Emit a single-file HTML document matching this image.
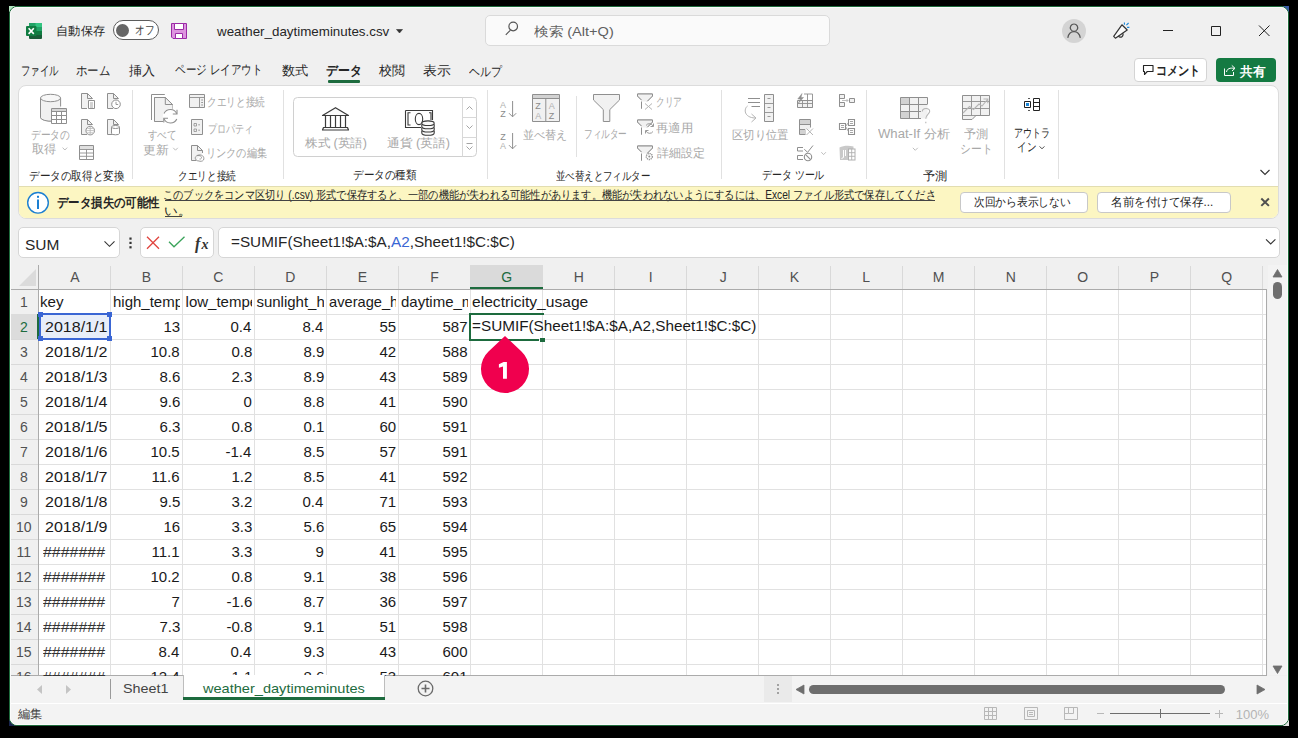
<!DOCTYPE html>
<html lang="ja"><head><meta charset="utf-8"><style>
html,body{margin:0;padding:0;width:1298px;height:738px;overflow:hidden;background:#000;font-family:"Liberation Sans", sans-serif;}
.t{position:absolute;white-space:nowrap;line-height:1;transform-origin:0 0;}
svg{overflow:visible}
</style></head><body>
<div style="position:absolute;left:9px;top:6px;width:6px;height:6px;background:#B4E6C2;"></div>
<div style="position:absolute;left:1283px;top:6px;width:6px;height:6px;background:#3A5CA8;"></div>
<div style="position:absolute;left:9px;top:720px;width:6px;height:6px;background:#1A2550;"></div>
<div style="position:absolute;left:1283px;top:720px;width:6px;height:6px;background:#E4E4E4;"></div>
<div style="position:absolute;left:9px;top:6px;width:1280px;height:720px;background:#F0F0F0;border:1px solid #1E6B3C;box-sizing:border-box;border-radius:8px;"></div>
<div class="t" style="left:56.46px;top:24.80px;font-size:12px;color:#262626;transform:scale(1.0217,1.0000);">自動保存</div>
<div style="position:absolute;left:113px;top:20px;width:46px;height:20px;border:1px solid #5c5c5c;border-radius:10px;box-sizing:border-box;background:#fff;"></div>
<div style="position:absolute;left:116px;top:24px;width:13px;height:13px;background:#666;border-radius:50%;"></div>
<div class="t" style="left:135.10px;top:23.90px;font-size:12px;color:#444;transform:scale(0.8048,1.0000);">オフ</div>
<div class="t" style="left:217.30px;top:24.70px;font-size:13.5px;color:#262626;transform:scale(0.9897,1.0000);">weather_daytimeminutes.csv</div>
<div style="position:absolute;left:485px;top:15px;width:345px;height:31px;background:#FAFAFA;border:1px solid #DADADA;box-sizing:border-box;border-radius:5px;"></div>
<div class="t" style="left:534.00px;top:24.50px;font-size:13px;color:#606060;transform:scale(1.1214,1.0000);">検索 (Alt+Q)</div>
<div class="t" style="left:20.84px;top:63.60px;font-size:13px;color:#262626;transform:scale(0.7280,1.0000);">ファイル</div>
<div class="t" style="left:76.12px;top:63.60px;font-size:13px;color:#262626;transform:scale(0.8838,1.0000);">ホーム</div>
<div class="t" style="left:129.00px;top:64.10px;font-size:13px;color:#262626;">挿入</div>
<div class="t" style="left:175.19px;top:63.10px;font-size:13px;color:#262626;transform:scale(0.8125,1.0000);">ページ レイアウト</div>
<div class="t" style="left:281.88px;top:64.10px;font-size:13px;color:#262626;transform:scale(1.0160,1.0000);">数式</div>
<div class="t" style="left:326.49px;top:63.60px;font-size:13px;color:#262626;font-weight:bold;transform:scale(0.9139,1.0000);">データ</div>
<div class="t" style="left:379.00px;top:63.60px;font-size:13px;color:#262626;">校閲</div>
<div class="t" style="left:422.63px;top:64.10px;font-size:13px;color:#262626;transform:scale(1.0667,1.0000);">表示</div>
<div class="t" style="left:468.50px;top:64.60px;font-size:13px;color:#262626;transform:scale(0.8410,1.0000);">ヘルプ</div>
<div style="position:absolute;left:328px;top:80px;width:32px;height:2.5px;background:#1D6B3E;border-radius:1px;"></div>
<div style="position:absolute;left:1134px;top:58px;width:73px;height:24px;background:#fff;border:1px solid #D4D4D4;box-sizing:border-box;border-radius:4px;"></div>
<div class="t" style="left:1156.29px;top:64.00px;font-size:13px;color:#262626;font-weight:bold;transform:scale(0.8574,1.0000);">コメント</div>
<div style="position:absolute;left:1216px;top:58px;width:60px;height:24px;background:#147A42;border-radius:4px;"></div>
<div class="t" style="left:1240.20px;top:65.00px;font-size:13px;color:#FFFFFF;font-weight:bold;transform:scale(0.9769,1.0000);">共有</div>
<div style="position:absolute;left:18px;top:85px;width:1261px;height:134px;background:#fff;border:1px solid #DCDCDC;box-sizing:border-box;border-radius:8px;"></div>
<div style="position:absolute;left:19px;top:186px;width:1259px;height:32px;background:#FCF6C2;border-top:1px solid #E2DDB0;box-sizing:border-box;border-radius:0 0 7px 7px;"></div>
<svg style="position:absolute;left:0px;top:0px" width="1298" height="738" viewBox="0 0 1298 738"><path d="M297.5 97.5 H472.5 A4 4 0 0 1 476.5 101.5 V152.5 A4 4 0 0 1 472.5 156.5 H297.5 A4 4 0 0 1 293.5 152.5 V101.5 A4 4 0 0 1 297.5 97.5 Z" stroke="#D0D0D0" fill="#FFFFFF"/><path d="M462.5 97.5 V156.5 M462.5 117.5 H476.5 M462.5 137.5 H476.5" stroke="#D8D8D8" fill="none"/></svg>
<div class="t" style="left:31.19px;top:128.50px;font-size:12px;color:#A8A8A8;transform:scale(0.8085,1.0000);">データの</div>
<div class="t" style="left:32.28px;top:143.40px;font-size:12px;color:#A8A8A8;transform:scale(1.0182,1.0000);">取得</div>
<div class="t" style="left:147.90px;top:129.30px;font-size:12px;color:#A8A8A8;transform:scale(0.7914,1.0000);">すべて</div>
<div class="t" style="left:143.43px;top:144.00px;font-size:12px;color:#A8A8A8;transform:scale(1.0682,1.0000);">更新</div>
<div class="t" style="left:207.19px;top:96.30px;font-size:12px;color:#A8A8A8;transform:scale(0.8029,1.0000);">クエリと接続</div>
<div class="t" style="left:208.04px;top:122.90px;font-size:12px;color:#A8A8A8;transform:scale(0.7579,1.0000);">プロパティ</div>
<div class="t" style="left:206.26px;top:146.70px;font-size:12px;color:#A8A8A8;transform:scale(0.8471,1.0000);">リンクの編集</div>
<div class="t" style="left:304.70px;top:137.00px;font-size:12px;color:#A8A8A8;transform:scale(1.0458,1.0000);">株式 (英語)</div>
<div class="t" style="left:386.64px;top:137.00px;font-size:12px;color:#A8A8A8;transform:scale(1.0621,1.0000);">通貨 (英語)</div>
<div class="t" style="left:522.87px;top:128.90px;font-size:12px;color:#A8A8A8;transform:scale(0.9261,1.0000);">並べ替え</div>
<div class="t" style="left:584.18px;top:128.40px;font-size:12px;color:#A8A8A8;transform:scale(0.7172,1.0000);">フィルター</div>
<div class="t" style="left:655.55px;top:95.50px;font-size:12px;color:#A8A8A8;transform:scale(0.7273,1.0000);">クリア</div>
<div class="t" style="left:655.97px;top:121.50px;font-size:12px;color:#A8A8A8;transform:scale(1.0294,1.0000);">再適用</div>
<div class="t" style="left:657.00px;top:147.40px;font-size:12px;color:#A8A8A8;">詳細設定</div>
<div class="t" style="left:731.96px;top:128.50px;font-size:12px;color:#A8A8A8;transform:scale(0.9448,1.0000);">区切り位置</div>
<div class="t" style="left:877.60px;top:128.30px;font-size:12px;color:#A8A8A8;transform:scale(1.0924,1.0000);">What-If 分析</div>
<div class="t" style="left:964.40px;top:128.30px;font-size:12px;color:#A8A8A8;transform:scale(1.0043,1.0000);">予測</div>
<div class="t" style="left:960.21px;top:142.50px;font-size:12px;color:#A8A8A8;transform:scale(0.8968,1.0000);">シート</div>
<div class="t" style="left:1014.45px;top:126.80px;font-size:12px;color:#262626;transform:scale(0.7511,1.0000);">アウトラ</div>
<div class="t" style="left:1016.70px;top:141.40px;font-size:12px;color:#262626;transform:scale(0.7955,1.0000);">イン</div>
<div class="t" style="left:29.12px;top:169.50px;font-size:12px;color:#262626;transform:scale(0.8821,1.0000);">データの取得と変換</div>
<div class="t" style="left:178.09px;top:169.50px;font-size:12px;color:#262626;transform:scale(0.8043,1.0000);">クエリと接続</div>
<div class="t" style="left:352.82px;top:169.00px;font-size:12px;color:#262626;transform:scale(0.8775,1.0000);">データの種類</div>
<div class="t" style="left:556.22px;top:169.50px;font-size:12px;color:#262626;transform:scale(0.7847,1.0000);">並べ替えとフィルター</div>
<div class="t" style="left:761.87px;top:169.00px;font-size:12px;color:#262626;transform:scale(0.8284,1.0000);">データ ツール</div>
<div class="t" style="left:923.20px;top:169.50px;font-size:12px;color:#262626;transform:scale(1.0087,1.0000);">予測</div>
<div style="position:absolute;left:132px;top:90px;width:1px;height:89px;background:#E1E1E1;"></div>
<div style="position:absolute;left:283px;top:90px;width:1px;height:89px;background:#E1E1E1;"></div>
<div style="position:absolute;left:487px;top:90px;width:1px;height:89px;background:#E1E1E1;"></div>
<div style="position:absolute;left:721px;top:90px;width:1px;height:89px;background:#E1E1E1;"></div>
<div style="position:absolute;left:866px;top:90px;width:1px;height:89px;background:#E1E1E1;"></div>
<div style="position:absolute;left:1004px;top:90px;width:1px;height:89px;background:#E1E1E1;"></div>
<div style="position:absolute;left:1058px;top:90px;width:1px;height:89px;background:#E1E1E1;"></div>
<div class="t" style="left:56.82px;top:196.40px;font-size:13px;color:#262626;font-weight:bold;transform:scale(0.8767,1.0000);">データ損失の可能性</div>
<div class="t" style="left:163.30px;top:189.30px;font-size:12px;color:#262626;transform:scale(0.8505,1.0000);">このブックをコンマ区切り (.csv) 形式で保存すると、一部の機能が失われる可能性があります。機能が失われないようにするには、Excel ファイル形式で保存してくださ</div>
<div class="t" style="left:163.87px;top:204.80px;font-size:12px;color:#262626;transform:scale(1.1333,1.0000);">い。</div>
<div style="position:absolute;left:165px;top:200px;width:770px;height:1px;background:#444;"></div>
<div style="position:absolute;left:165px;top:216px;width:17px;height:1px;background:#444;"></div>
<div style="position:absolute;left:960px;top:192px;width:128px;height:21px;background:#fff;border:1px solid #C8C8C8;box-sizing:border-box;border-radius:4px;"></div>
<div style="position:absolute;left:1097px;top:192px;width:134px;height:21px;background:#fff;border:1px solid #C8C8C8;box-sizing:border-box;border-radius:4px;"></div>
<div class="t" style="left:974.01px;top:195.80px;font-size:12px;color:#262626;transform:scale(0.8935,1.0000);">次回から表示しない</div>
<div class="t" style="left:1111.44px;top:196.30px;font-size:12px;color:#262626;transform:scale(0.9644,1.0000);">名前を付けて保存...</div>
<div style="position:absolute;left:18px;top:227px;width:102px;height:31px;background:#fff;border:1px solid #D6D6D6;box-sizing:border-box;border-radius:5px;"></div>
<div class="t" style="left:24.67px;top:237.10px;font-size:15px;color:#262626;transform:scale(1.0323,1.0000);">SUM</div>
<div style="position:absolute;left:140px;top:227px;width:74px;height:31px;background:#fff;border:1px solid #D6D6D6;box-sizing:border-box;border-radius:5px;"></div>
<div style="position:absolute;left:218px;top:227px;width:1062px;height:31px;background:#fff;border:1px solid #D6D6D6;box-sizing:border-box;border-radius:5px;"></div>
<div class="t" style="left:230.78px;top:234.10px;font-size:15px;color:#262626;transform:scale(1.0181,1.0000);">=SUMIF(Sheet1!$A:$A,<span style="color:#3A66D4">A2</span>,Sheet1!$C:$C)</div>
<div style="position:absolute;left:10px;top:265px;width:1256px;height:24px;background:#F0F0F0;"></div>
<div style="position:absolute;left:10px;top:289px;width:28px;height:386px;background:#F0F0F0;"></div>
<div style="position:absolute;left:39px;top:290px;width:1227px;height:385px;background:#fff;"></div>
<div style="position:absolute;left:110px;top:290px;width:1px;height:385px;background:#E1E1E1;"></div>
<div style="position:absolute;left:110px;top:266px;width:1px;height:23px;background:#D9D9D9;"></div>
<div style="position:absolute;left:182px;top:290px;width:1px;height:385px;background:#E1E1E1;"></div>
<div style="position:absolute;left:182px;top:266px;width:1px;height:23px;background:#D9D9D9;"></div>
<div style="position:absolute;left:254px;top:290px;width:1px;height:385px;background:#E1E1E1;"></div>
<div style="position:absolute;left:254px;top:266px;width:1px;height:23px;background:#D9D9D9;"></div>
<div style="position:absolute;left:326px;top:290px;width:1px;height:385px;background:#E1E1E1;"></div>
<div style="position:absolute;left:326px;top:266px;width:1px;height:23px;background:#D9D9D9;"></div>
<div style="position:absolute;left:398px;top:290px;width:1px;height:385px;background:#E1E1E1;"></div>
<div style="position:absolute;left:398px;top:266px;width:1px;height:23px;background:#D9D9D9;"></div>
<div style="position:absolute;left:470px;top:290px;width:1px;height:385px;background:#E1E1E1;"></div>
<div style="position:absolute;left:470px;top:266px;width:1px;height:23px;background:#D9D9D9;"></div>
<div style="position:absolute;left:542px;top:290px;width:1px;height:385px;background:#E1E1E1;"></div>
<div style="position:absolute;left:542px;top:266px;width:1px;height:23px;background:#D9D9D9;"></div>
<div style="position:absolute;left:614px;top:290px;width:1px;height:385px;background:#E1E1E1;"></div>
<div style="position:absolute;left:614px;top:266px;width:1px;height:23px;background:#D9D9D9;"></div>
<div style="position:absolute;left:686px;top:290px;width:1px;height:385px;background:#E1E1E1;"></div>
<div style="position:absolute;left:686px;top:266px;width:1px;height:23px;background:#D9D9D9;"></div>
<div style="position:absolute;left:758px;top:290px;width:1px;height:385px;background:#E1E1E1;"></div>
<div style="position:absolute;left:758px;top:266px;width:1px;height:23px;background:#D9D9D9;"></div>
<div style="position:absolute;left:830px;top:290px;width:1px;height:385px;background:#E1E1E1;"></div>
<div style="position:absolute;left:830px;top:266px;width:1px;height:23px;background:#D9D9D9;"></div>
<div style="position:absolute;left:902px;top:290px;width:1px;height:385px;background:#E1E1E1;"></div>
<div style="position:absolute;left:902px;top:266px;width:1px;height:23px;background:#D9D9D9;"></div>
<div style="position:absolute;left:974px;top:290px;width:1px;height:385px;background:#E1E1E1;"></div>
<div style="position:absolute;left:974px;top:266px;width:1px;height:23px;background:#D9D9D9;"></div>
<div style="position:absolute;left:1046px;top:290px;width:1px;height:385px;background:#E1E1E1;"></div>
<div style="position:absolute;left:1046px;top:266px;width:1px;height:23px;background:#D9D9D9;"></div>
<div style="position:absolute;left:1118px;top:290px;width:1px;height:385px;background:#E1E1E1;"></div>
<div style="position:absolute;left:1118px;top:266px;width:1px;height:23px;background:#D9D9D9;"></div>
<div style="position:absolute;left:1190px;top:290px;width:1px;height:385px;background:#E1E1E1;"></div>
<div style="position:absolute;left:1190px;top:266px;width:1px;height:23px;background:#D9D9D9;"></div>
<div style="position:absolute;left:1262px;top:290px;width:1px;height:385px;background:#E1E1E1;"></div>
<div style="position:absolute;left:1262px;top:266px;width:1px;height:23px;background:#D9D9D9;"></div>
<div style="position:absolute;left:39px;top:314px;width:1227px;height:1px;background:#E1E1E1;"></div>
<div style="position:absolute;left:10px;top:314px;width:28px;height:1px;background:#D9D9D9;"></div>
<div style="position:absolute;left:39px;top:339px;width:1227px;height:1px;background:#E1E1E1;"></div>
<div style="position:absolute;left:10px;top:339px;width:28px;height:1px;background:#D9D9D9;"></div>
<div style="position:absolute;left:39px;top:364px;width:1227px;height:1px;background:#E1E1E1;"></div>
<div style="position:absolute;left:10px;top:364px;width:28px;height:1px;background:#D9D9D9;"></div>
<div style="position:absolute;left:39px;top:389px;width:1227px;height:1px;background:#E1E1E1;"></div>
<div style="position:absolute;left:10px;top:389px;width:28px;height:1px;background:#D9D9D9;"></div>
<div style="position:absolute;left:39px;top:414px;width:1227px;height:1px;background:#E1E1E1;"></div>
<div style="position:absolute;left:10px;top:414px;width:28px;height:1px;background:#D9D9D9;"></div>
<div style="position:absolute;left:39px;top:439px;width:1227px;height:1px;background:#E1E1E1;"></div>
<div style="position:absolute;left:10px;top:439px;width:28px;height:1px;background:#D9D9D9;"></div>
<div style="position:absolute;left:39px;top:464px;width:1227px;height:1px;background:#E1E1E1;"></div>
<div style="position:absolute;left:10px;top:464px;width:28px;height:1px;background:#D9D9D9;"></div>
<div style="position:absolute;left:39px;top:489px;width:1227px;height:1px;background:#E1E1E1;"></div>
<div style="position:absolute;left:10px;top:489px;width:28px;height:1px;background:#D9D9D9;"></div>
<div style="position:absolute;left:39px;top:514px;width:1227px;height:1px;background:#E1E1E1;"></div>
<div style="position:absolute;left:10px;top:514px;width:28px;height:1px;background:#D9D9D9;"></div>
<div style="position:absolute;left:39px;top:539px;width:1227px;height:1px;background:#E1E1E1;"></div>
<div style="position:absolute;left:10px;top:539px;width:28px;height:1px;background:#D9D9D9;"></div>
<div style="position:absolute;left:39px;top:564px;width:1227px;height:1px;background:#E1E1E1;"></div>
<div style="position:absolute;left:10px;top:564px;width:28px;height:1px;background:#D9D9D9;"></div>
<div style="position:absolute;left:39px;top:589px;width:1227px;height:1px;background:#E1E1E1;"></div>
<div style="position:absolute;left:10px;top:589px;width:28px;height:1px;background:#D9D9D9;"></div>
<div style="position:absolute;left:39px;top:614px;width:1227px;height:1px;background:#E1E1E1;"></div>
<div style="position:absolute;left:10px;top:614px;width:28px;height:1px;background:#D9D9D9;"></div>
<div style="position:absolute;left:39px;top:639px;width:1227px;height:1px;background:#E1E1E1;"></div>
<div style="position:absolute;left:10px;top:639px;width:28px;height:1px;background:#D9D9D9;"></div>
<div style="position:absolute;left:39px;top:664px;width:1227px;height:1px;background:#E1E1E1;"></div>
<div style="position:absolute;left:10px;top:664px;width:28px;height:1px;background:#D9D9D9;"></div>
<div style="position:absolute;left:10px;top:289px;width:1257px;height:1px;background:#ABABAB;"></div>
<div style="position:absolute;left:38px;top:265px;width:1px;height:410px;background:#ABABAB;"></div>
<div style="position:absolute;left:1266px;top:289px;width:1px;height:387px;background:#ABABAB;"></div>
<div style="position:absolute;left:10px;top:675px;width:1257px;height:1px;background:#ABABAB;"></div>
<svg style="position:absolute;left:19px;top:269px" width="17" height="17" viewBox="0 0 17 17"><polygon points="17,0 17,17 0,17" fill="#DBDBDB"/></svg>
<div style="position:absolute;left:470px;top:265px;width:73px;height:24px;background:#DADADA;"></div>
<div style="position:absolute;left:470px;top:287px;width:73px;height:2px;background:#1D6B3E;"></div>
<div style="position:absolute;left:10px;top:314px;width:28px;height:25px;background:#DCDCDC;"></div>
<div style="position:absolute;left:37px;top:314px;width:2px;height:25px;background:#1D6B3E;"></div>
<div class="t" style="left:70.30px;top:270.00px;font-size:14px;color:#505050;">A</div>
<div class="t" style="left:141.80px;top:270.00px;font-size:14px;color:#505050;">B</div>
<div class="t" style="left:213.30px;top:270.00px;font-size:14px;color:#505050;">C</div>
<div class="t" style="left:285.30px;top:270.00px;font-size:14px;color:#505050;">D</div>
<div class="t" style="left:357.80px;top:270.00px;font-size:14px;color:#505050;">E</div>
<div class="t" style="left:430.30px;top:270.00px;font-size:14px;color:#505050;">F</div>
<div class="t" style="left:501.30px;top:270.00px;font-size:14px;color:#1D6B3E;">G</div>
<div class="t" style="left:573.80px;top:270.00px;font-size:14px;color:#505050;">H</div>
<div class="t" style="left:648.80px;top:270.00px;font-size:14px;color:#505050;">I</div>
<div class="t" style="left:719.80px;top:270.00px;font-size:14px;color:#505050;">J</div>
<div class="t" style="left:789.80px;top:270.00px;font-size:14px;color:#505050;">K</div>
<div class="t" style="left:862.30px;top:270.00px;font-size:14px;color:#505050;">L</div>
<div class="t" style="left:932.80px;top:270.00px;font-size:14px;color:#505050;">M</div>
<div class="t" style="left:1005.80px;top:270.00px;font-size:14px;color:#505050;">N</div>
<div class="t" style="left:1077.30px;top:270.00px;font-size:14px;color:#505050;">O</div>
<div class="t" style="left:1149.80px;top:270.00px;font-size:14px;color:#505050;">P</div>
<div class="t" style="left:1221.30px;top:270.00px;font-size:14px;color:#505050;">Q</div>
<div class="t" style="left:20.00px;top:295.00px;font-size:14px;color:#505050;">1</div>
<div class="t" style="left:20.00px;top:320.00px;font-size:14px;color:#1D6B3E;">2</div>
<div class="t" style="left:20.00px;top:345.00px;font-size:14px;color:#505050;">3</div>
<div class="t" style="left:20.00px;top:370.00px;font-size:14px;color:#505050;">4</div>
<div class="t" style="left:20.00px;top:395.00px;font-size:14px;color:#505050;">5</div>
<div class="t" style="left:20.00px;top:420.00px;font-size:14px;color:#505050;">6</div>
<div class="t" style="left:20.00px;top:445.00px;font-size:14px;color:#505050;">7</div>
<div class="t" style="left:20.00px;top:470.00px;font-size:14px;color:#505050;">8</div>
<div class="t" style="left:20.00px;top:495.00px;font-size:14px;color:#505050;">9</div>
<div class="t" style="left:16.00px;top:520.00px;font-size:14px;color:#505050;">10</div>
<div class="t" style="left:16.50px;top:545.00px;font-size:14px;color:#505050;">11</div>
<div class="t" style="left:16.00px;top:570.00px;font-size:14px;color:#505050;">12</div>
<div class="t" style="left:16.00px;top:595.00px;font-size:14px;color:#505050;">13</div>
<div class="t" style="left:16.00px;top:620.00px;font-size:14px;color:#505050;">14</div>
<div class="t" style="left:16.00px;top:645.00px;font-size:14px;color:#505050;">15</div>
<div class="t" style="left:16.00px;top:670.00px;font-size:14px;color:#505050;">16</div>
<div style="position:absolute;left:39px;top:315px;width:71px;height:24px;background:#E8EEF9;"></div>
<div class="t" style="left:45.23px;top:319.00px;font-size:15px;color:#1a1a1a;transform:scale(1.0684,1.0000);">2018/1/1</div>
<div class="t" style="left:163.50px;top:319.00px;font-size:15px;color:#1a1a1a;">13</div>
<div class="t" style="left:230.50px;top:319.00px;font-size:15px;color:#1a1a1a;">0.4</div>
<div class="t" style="left:302.50px;top:319.00px;font-size:15px;color:#1a1a1a;">8.4</div>
<div class="t" style="left:379.50px;top:319.00px;font-size:15px;color:#1a1a1a;">55</div>
<div class="t" style="left:442.50px;top:319.00px;font-size:15px;color:#1a1a1a;">587</div>
<div class="t" style="left:45.23px;top:344.00px;font-size:15px;color:#1a1a1a;transform:scale(1.0684,1.0000);">2018/1/2</div>
<div class="t" style="left:150.50px;top:344.00px;font-size:15px;color:#1a1a1a;">10.8</div>
<div class="t" style="left:231.50px;top:344.00px;font-size:15px;color:#1a1a1a;">0.8</div>
<div class="t" style="left:303.50px;top:344.00px;font-size:15px;color:#1a1a1a;">8.9</div>
<div class="t" style="left:379.50px;top:344.00px;font-size:15px;color:#1a1a1a;">42</div>
<div class="t" style="left:442.50px;top:344.00px;font-size:15px;color:#1a1a1a;">588</div>
<div class="t" style="left:45.23px;top:369.00px;font-size:15px;color:#1a1a1a;transform:scale(1.0684,1.0000);">2018/1/3</div>
<div class="t" style="left:159.50px;top:369.00px;font-size:15px;color:#1a1a1a;">8.6</div>
<div class="t" style="left:231.50px;top:369.00px;font-size:15px;color:#1a1a1a;">2.3</div>
<div class="t" style="left:303.50px;top:369.00px;font-size:15px;color:#1a1a1a;">8.9</div>
<div class="t" style="left:379.50px;top:369.00px;font-size:15px;color:#1a1a1a;">43</div>
<div class="t" style="left:442.50px;top:369.00px;font-size:15px;color:#1a1a1a;">589</div>
<div class="t" style="left:45.23px;top:394.00px;font-size:15px;color:#1a1a1a;transform:scale(1.0684,1.0000);">2018/1/4</div>
<div class="t" style="left:159.50px;top:394.00px;font-size:15px;color:#1a1a1a;">9.6</div>
<div class="t" style="left:243.50px;top:394.00px;font-size:15px;color:#1a1a1a;">0</div>
<div class="t" style="left:303.50px;top:394.00px;font-size:15px;color:#1a1a1a;">8.8</div>
<div class="t" style="left:379.50px;top:394.00px;font-size:15px;color:#1a1a1a;">41</div>
<div class="t" style="left:442.50px;top:394.00px;font-size:15px;color:#1a1a1a;">590</div>
<div class="t" style="left:45.23px;top:419.00px;font-size:15px;color:#1a1a1a;transform:scale(1.0684,1.0000);">2018/1/5</div>
<div class="t" style="left:159.50px;top:419.00px;font-size:15px;color:#1a1a1a;">6.3</div>
<div class="t" style="left:231.50px;top:419.00px;font-size:15px;color:#1a1a1a;">0.8</div>
<div class="t" style="left:303.50px;top:419.00px;font-size:15px;color:#1a1a1a;">0.1</div>
<div class="t" style="left:379.50px;top:419.00px;font-size:15px;color:#1a1a1a;">60</div>
<div class="t" style="left:442.50px;top:419.00px;font-size:15px;color:#1a1a1a;">591</div>
<div class="t" style="left:45.23px;top:444.00px;font-size:15px;color:#1a1a1a;transform:scale(1.0684,1.0000);">2018/1/6</div>
<div class="t" style="left:150.50px;top:444.00px;font-size:15px;color:#1a1a1a;">10.5</div>
<div class="t" style="left:225.50px;top:444.00px;font-size:15px;color:#1a1a1a;">-1.4</div>
<div class="t" style="left:303.50px;top:444.00px;font-size:15px;color:#1a1a1a;">8.5</div>
<div class="t" style="left:379.50px;top:444.00px;font-size:15px;color:#1a1a1a;">57</div>
<div class="t" style="left:442.50px;top:444.00px;font-size:15px;color:#1a1a1a;">591</div>
<div class="t" style="left:45.23px;top:469.00px;font-size:15px;color:#1a1a1a;transform:scale(1.0684,1.0000);">2018/1/7</div>
<div class="t" style="left:151.50px;top:469.00px;font-size:15px;color:#1a1a1a;">11.6</div>
<div class="t" style="left:231.50px;top:469.00px;font-size:15px;color:#1a1a1a;">1.2</div>
<div class="t" style="left:303.50px;top:469.00px;font-size:15px;color:#1a1a1a;">8.5</div>
<div class="t" style="left:379.50px;top:469.00px;font-size:15px;color:#1a1a1a;">41</div>
<div class="t" style="left:442.50px;top:469.00px;font-size:15px;color:#1a1a1a;">592</div>
<div class="t" style="left:45.23px;top:494.00px;font-size:15px;color:#1a1a1a;transform:scale(1.0684,1.0000);">2018/1/8</div>
<div class="t" style="left:159.50px;top:494.00px;font-size:15px;color:#1a1a1a;">9.5</div>
<div class="t" style="left:231.50px;top:494.00px;font-size:15px;color:#1a1a1a;">3.2</div>
<div class="t" style="left:302.50px;top:494.00px;font-size:15px;color:#1a1a1a;">0.4</div>
<div class="t" style="left:379.50px;top:494.00px;font-size:15px;color:#1a1a1a;">71</div>
<div class="t" style="left:442.50px;top:494.00px;font-size:15px;color:#1a1a1a;">593</div>
<div class="t" style="left:45.23px;top:519.00px;font-size:15px;color:#1a1a1a;transform:scale(1.0684,1.0000);">2018/1/9</div>
<div class="t" style="left:163.50px;top:519.00px;font-size:15px;color:#1a1a1a;">16</div>
<div class="t" style="left:231.50px;top:519.00px;font-size:15px;color:#1a1a1a;">3.3</div>
<div class="t" style="left:303.50px;top:519.00px;font-size:15px;color:#1a1a1a;">5.6</div>
<div class="t" style="left:379.50px;top:519.00px;font-size:15px;color:#1a1a1a;">65</div>
<div class="t" style="left:442.50px;top:519.00px;font-size:15px;color:#1a1a1a;">594</div>
<div class="t" style="left:43.10px;top:544.00px;font-size:15px;color:#333333;transform:scale(1.0638,1.0000);">#######</div>
<div class="t" style="left:151.50px;top:544.00px;font-size:15px;color:#1a1a1a;">11.1</div>
<div class="t" style="left:231.50px;top:544.00px;font-size:15px;color:#1a1a1a;">3.3</div>
<div class="t" style="left:315.50px;top:544.00px;font-size:15px;color:#1a1a1a;">9</div>
<div class="t" style="left:379.50px;top:544.00px;font-size:15px;color:#1a1a1a;">41</div>
<div class="t" style="left:442.50px;top:544.00px;font-size:15px;color:#1a1a1a;">595</div>
<div class="t" style="left:43.10px;top:569.00px;font-size:15px;color:#333333;transform:scale(1.0638,1.0000);">#######</div>
<div class="t" style="left:150.50px;top:569.00px;font-size:15px;color:#1a1a1a;">10.2</div>
<div class="t" style="left:231.50px;top:569.00px;font-size:15px;color:#1a1a1a;">0.8</div>
<div class="t" style="left:303.50px;top:569.00px;font-size:15px;color:#1a1a1a;">9.1</div>
<div class="t" style="left:379.50px;top:569.00px;font-size:15px;color:#1a1a1a;">38</div>
<div class="t" style="left:442.50px;top:569.00px;font-size:15px;color:#1a1a1a;">596</div>
<div class="t" style="left:43.10px;top:594.00px;font-size:15px;color:#333333;transform:scale(1.0638,1.0000);">#######</div>
<div class="t" style="left:171.50px;top:594.00px;font-size:15px;color:#1a1a1a;">7</div>
<div class="t" style="left:226.50px;top:594.00px;font-size:15px;color:#1a1a1a;">-1.6</div>
<div class="t" style="left:303.50px;top:594.00px;font-size:15px;color:#1a1a1a;">8.7</div>
<div class="t" style="left:379.50px;top:594.00px;font-size:15px;color:#1a1a1a;">36</div>
<div class="t" style="left:442.50px;top:594.00px;font-size:15px;color:#1a1a1a;">597</div>
<div class="t" style="left:43.10px;top:619.00px;font-size:15px;color:#333333;transform:scale(1.0638,1.0000);">#######</div>
<div class="t" style="left:159.50px;top:619.00px;font-size:15px;color:#1a1a1a;">7.3</div>
<div class="t" style="left:226.50px;top:619.00px;font-size:15px;color:#1a1a1a;">-0.8</div>
<div class="t" style="left:303.50px;top:619.00px;font-size:15px;color:#1a1a1a;">9.1</div>
<div class="t" style="left:379.50px;top:619.00px;font-size:15px;color:#1a1a1a;">51</div>
<div class="t" style="left:442.50px;top:619.00px;font-size:15px;color:#1a1a1a;">598</div>
<div class="t" style="left:43.10px;top:644.00px;font-size:15px;color:#333333;transform:scale(1.0638,1.0000);">#######</div>
<div class="t" style="left:158.50px;top:644.00px;font-size:15px;color:#1a1a1a;">8.4</div>
<div class="t" style="left:230.50px;top:644.00px;font-size:15px;color:#1a1a1a;">0.4</div>
<div class="t" style="left:303.50px;top:644.00px;font-size:15px;color:#1a1a1a;">9.3</div>
<div class="t" style="left:379.50px;top:644.00px;font-size:15px;color:#1a1a1a;">43</div>
<div class="t" style="left:442.50px;top:644.00px;font-size:15px;color:#1a1a1a;">600</div>
<div class="t" style="left:43.10px;top:669.00px;font-size:15px;color:#333333;transform:scale(1.0638,1.0000);">#######</div>
<div class="t" style="left:150.50px;top:669.00px;font-size:15px;color:#1a1a1a;">12.4</div>
<div class="t" style="left:231.50px;top:669.00px;font-size:15px;color:#1a1a1a;">1.1</div>
<div class="t" style="left:303.50px;top:669.00px;font-size:15px;color:#1a1a1a;">8.6</div>
<div class="t" style="left:379.50px;top:669.00px;font-size:15px;color:#1a1a1a;">53</div>
<div class="t" style="left:442.50px;top:669.00px;font-size:15px;color:#1a1a1a;">601</div>
<div class="t" style="left:40.09px;top:294.00px;font-size:15px;color:#1a1a1a;transform:scale(1.0091,1.0000);">key</div>
<div style="position:absolute;left:111px;top:290px;width:69px;height:24px;overflow:hidden;"><div class="t" style="left:2.0px;top:4px;font-size:15px;color:#1a1a1a;">high_temperature</div></div>
<div style="position:absolute;left:183px;top:290px;width:69px;height:24px;overflow:hidden;"><div class="t" style="left:2.6px;top:4px;font-size:15px;color:#1a1a1a;">low_temperature</div></div>
<div style="position:absolute;left:255px;top:290px;width:69px;height:24px;overflow:hidden;"><div class="t" style="left:1.4px;top:4px;font-size:15px;color:#1a1a1a;">sunlight_hours</div></div>
<div style="position:absolute;left:327px;top:290px;width:69px;height:24px;overflow:hidden;"><div class="t" style="left:1.52px;top:4px;font-size:15px;color:#1a1a1a;transform:scaleX(0.977);">average_humidity</div></div>
<div style="position:absolute;left:399px;top:290px;width:69px;height:24px;overflow:hidden;"><div class="t" style="left:2.0px;top:4px;font-size:15px;color:#1a1a1a;">daytime_minutes</div></div>
<div class="t" style="left:472.46px;top:294.00px;font-size:15px;color:#1a1a1a;transform:scale(1.0409,1.0000);">electricity_usage</div>
<div class="t" style="left:472.48px;top:318.00px;font-size:15px;color:#1a1a1a;transform:scale(1.0199,1.0000);">=SUMIF(Sheet1!$A:$A,A2,Sheet1!$C:$C)</div>
<div style="position:absolute;left:39px;top:313px;width:72px;height:27px;border:2px solid #3A66D4;box-sizing:border-box;"></div>
<div style="position:absolute;left:38px;top:312px;width:5px;height:5px;background:#3A66D4;"></div>
<div style="position:absolute;left:107px;top:312px;width:5px;height:5px;background:#3A66D4;"></div>
<div style="position:absolute;left:38px;top:336px;width:5px;height:5px;background:#3A66D4;"></div>
<div style="position:absolute;left:107px;top:336px;width:5px;height:5px;background:#3A66D4;"></div>
<div style="position:absolute;left:469px;top:313px;width:75px;height:2px;background:#1D6B3E;"></div>
<div style="position:absolute;left:469px;top:313px;width:2px;height:28px;background:#1D6B3E;"></div>
<div style="position:absolute;left:469px;top:339px;width:70px;height:2px;background:#1D6B3E;"></div>
<div style="position:absolute;left:540px;top:338px;width:5px;height:4px;background:#1D6B3E;"></div>
<svg style="position:absolute;left:481px;top:336px" width="48" height="58" viewBox="0 0 48 58"><path d="M24 0 L40.5 15.5 A24 24 0 1 1 7.5 15.5 Z" fill="#F0004E"/></svg>
<svg style="position:absolute;left:0px;top:0px" width="1298" height="738" viewBox="0 0 1298 738"><path d="M503.6 362.1 H506.9 V378.8 H503 V366.6 L498.9 367.8 V364.3 Z" fill="#FFFFFF"/></svg>
<div style="position:absolute;left:1268px;top:265px;width:20px;height:410px;background:#F3F3F3;"></div>
<svg style="position:absolute;left:1273px;top:269px" width="9" height="8" viewBox="0 0 9 8"><polygon points="4.5,0.5 9,8 0,8" fill="#6E6E6E" stroke="#6E6E6E" stroke-width="0.8" stroke-linejoin="round"/></svg>
<div style="position:absolute;left:1273px;top:282px;width:9px;height:17px;background:#6E6E6E;border-radius:4.5px;"></div>
<svg style="position:absolute;left:1273px;top:666px" width="9" height="8" viewBox="0 0 9 8"><polygon points="0,0 9,0 4.5,7.5" fill="#6E6E6E" stroke="#6E6E6E" stroke-width="0.8" stroke-linejoin="round"/></svg>
<div style="position:absolute;left:10px;top:676px;width:1278px;height:27px;background:#F3F3F3;"></div>
<svg style="position:absolute;left:37px;top:685px" width="5" height="9" viewBox="0 0 5 9"><polygon points="5,0 5,9 0,4.5" fill="#C4C4C4"/></svg>
<svg style="position:absolute;left:66px;top:685px" width="5" height="9" viewBox="0 0 5 9"><polygon points="0,0 0,9 5,4.5" fill="#C4C4C4"/></svg>
<div style="position:absolute;left:110px;top:679px;width:1px;height:20px;background:#9A9A9A;"></div>
<div class="t" style="left:123.14px;top:682.00px;font-size:13.5px;color:#444;transform:scale(1.0634,1.0000);">Sheet1</div>
<div style="position:absolute;left:183px;top:675px;width:202px;height:25px;background:#fff;border-left:1px solid #BDBDBD;border-right:1px solid #BDBDBD;box-sizing:border-box;"></div>
<div style="position:absolute;left:183px;top:697px;width:202px;height:3px;background:#1D6B3E;"></div>
<div class="t" style="left:203.40px;top:682.00px;font-size:13.5px;color:#1D6B3E;transform:scale(1.0787,1.0000);">weather_daytimeminutes</div>
<svg style="position:absolute;left:417px;top:680px" width="17" height="17" viewBox="0 0 17 17"><circle cx="8.5" cy="8.5" r="7.3" fill="none" stroke="#6A6A6A" stroke-width="1.3"/><path d="M8.5 4.5v8M4.5 8.5h8" stroke="#6A6A6A" stroke-width="1.6"/></svg>
<div style="position:absolute;left:764px;top:676px;width:28px;height:26px;background:#EAEAEA;"></div>
<div style="position:absolute;left:777px;top:684px;width:2px;height:2px;background:#8A8A8A;border-radius:1px;"></div>
<div style="position:absolute;left:777px;top:688px;width:2px;height:2px;background:#8A8A8A;border-radius:1px;"></div>
<div style="position:absolute;left:777px;top:692px;width:2px;height:2px;background:#8A8A8A;border-radius:1px;"></div>
<svg style="position:absolute;left:796px;top:685px" width="8" height="9" viewBox="0 0 8 9"><polygon points="8,0 8,9 0,4.5" fill="#6E6E6E" stroke="#6E6E6E" stroke-width="0.8" stroke-linejoin="round"/></svg>
<div style="position:absolute;left:809px;top:685px;width:416px;height:9px;background:#6E6E6E;border-radius:4.5px;"></div>
<svg style="position:absolute;left:1257px;top:685px" width="8" height="9" viewBox="0 0 8 9"><polygon points="0,0 0,9 8,4.5" fill="#6E6E6E" stroke="#6E6E6E" stroke-width="0.8" stroke-linejoin="round"/></svg>
<div style="position:absolute;left:10px;top:703px;width:1278px;height:1px;background:#FFFFFF;"></div>
<div style="position:absolute;left:10px;top:704px;width:1278px;height:20px;background:#F3F3F3;border-radius:0 0 7px 7px;"></div>
<div class="t" style="left:18.00px;top:708.10px;font-size:12px;color:#444;transform:scale(1.0217,1.0000);">編集</div>
<svg style="position:absolute;left:984px;top:707px" width="13" height="13" viewBox="0 0 13 13"><path d="M0.5 0.5h12v12h-12zM4.5 0.5v12M8.5 0.5v12M0.5 4.5h12M0.5 8.5h12" fill="none" stroke="#B8B8B8" stroke-width="1"/></svg>
<svg style="position:absolute;left:1024px;top:707px" width="14" height="13" viewBox="0 0 14 13"><path d="M0.5 0.5h13v12h-13zM3.5 3.5h7v6h-7zM5 5.5h4M5 7.5h4" fill="none" stroke="#B8B8B8" stroke-width="1"/></svg>
<svg style="position:absolute;left:1064px;top:707px" width="14" height="13" viewBox="0 0 14 13"><path d="M0.5 0.5h13v12h-13zM4.5 0.5v6h5v-6M0.5 6.5h4" fill="none" stroke="#B8B8B8" stroke-width="1"/></svg>
<div style="position:absolute;left:1097px;top:713px;width:7px;height:1px;background:#B8B8B8;"></div>
<div style="position:absolute;left:1110px;top:713px;width:100px;height:1px;background:#6E6E6E;"></div>
<div style="position:absolute;left:1160px;top:709px;width:1px;height:9px;background:#6E6E6E;"></div>
<div style="position:absolute;left:1215px;top:713px;width:8px;height:1px;background:#B8B8B8;"></div>
<div style="position:absolute;left:1218.5px;top:709.5px;width:1px;height:8px;background:#B8B8B8;"></div>
<div class="t" style="left:1235.80px;top:707.50px;font-size:13px;color:#B4B4B4;">100%</div>
<svg style="position:absolute;left:0;top:0" width="1298" height="738" viewBox="0 0 1298 738"><rect x="29" y="23" width="13" height="16" rx="1" fill="#185C37"/><rect x="29" y="23" width="13" height="4" fill="#21A366"/><rect x="35.5" y="23" width="6.5" height="4" fill="#33C481"/><rect x="29" y="27" width="13" height="4" fill="#21A366"/><rect x="29" y="31" width="13" height="4" fill="#107C41"/><rect x="26" y="26" width="10.5" height="10" rx="1" fill="#107C41"/><path d="M28.6 28.3 L33.8 33.9 M33.8 28.3 L28.6 33.9" stroke="#FFFFFF" fill="none" stroke-width="1.6" /><path d="M171.5 23.5 H186.5 V38.5 H173 L171.5 37 Z" stroke="#9B2AA6" fill="#DD95DF" stroke-width="1" /><path d="M174.5 23.5 H183.5 V29.5 H174.5 Z" stroke="#9B2AA6" fill="#FFFFFF" stroke-width="1" /><path d="M175.5 33.5 H182.5 V38.5 H175.5 Z" stroke="#9B2AA6" fill="#FFFFFF" stroke-width="1" /><path d="M396.5 29.5 L402.5 29.5 L399.5 33 Z" stroke="#333" fill="#333" stroke-width="0.6" /><path d="M513.2 26.5 m-4.3 0 a4.3 4.3 0 1 0 8.6 0 a4.3 4.3 0 1 0 -8.6 0 M510.2 30.3 L505.8 34.8" stroke="#555" fill="none" stroke-width="1.2" /><circle cx="1074" cy="30.9" r="12" fill="#D4D4D4"/><path d="M1074 24 a3.7 3.7 0 1 0 0.01 0 Z" stroke="#555" fill="none" stroke-width="1.2" /><path d="M1067.8 37.8 C1068.5 33.5 1071 31.6 1074 31.6 C1077 31.6 1079.5 33.5 1080.3 37.8" stroke="#555" fill="none" stroke-width="1.2" /><path d="M1113.7 36.4 L1121.9 24.8 L1127.2 30 L1115.4 38.2 Z" stroke="#333" fill="#FAFAFA" stroke-width="1.2" stroke-linejoin="round"/><path d="M1118.3 36 A2.5 2.5 0 1 0 1122.6 33" stroke="#333" fill="none" stroke-width="1.2" /><path d="M1124.4 22.6 V24.7 M1126.4 25.2 L1128.6 23 M1127.1 27.4 H1129.4" stroke="#1A86D8" fill="none" stroke-width="1.1" /><path d="M1163 30.5 H1173" stroke="#222" fill="none" stroke-width="1" /><path d="M1211.5 26.5 H1220.5 V35.5 H1211.5 Z" stroke="#222" fill="none" stroke-width="1" /><path d="M1259 25.5 L1269.5 36 M1269.5 25.5 L1259 36" stroke="#222" fill="none" stroke-width="1" /><path d="M1143.5 65.5 H1153 V71.5 H1147.3 L1144.5 74.5 V71.5 H1143.5 Z" stroke="#222" fill="none" stroke-width="1.1" stroke-linejoin="round"/><path d="M1224.5 68.5 V75.5 H1233.5 V72" stroke="#FFFFFF" fill="none" stroke-width="1" /><path d="M1226.5 72 C1227 68.6 1230 67.6 1234.5 68.4 M1231.8 65.4 L1235 68.3 L1232 71" stroke="#FFFFFF" fill="none" stroke-width="1" stroke-linejoin="round"/><path d="M40.5 98 V117.5 A10.1 3.8 0 0 0 54 120.8" stroke="#8F8F8F" fill="#F1F1F1" stroke-width="1" /><path d="M40.5 98 V117.5 A10.1 3.8 0 0 0 50.6 121.3 H51 V108 H60.6 V98 Z" fill="#F1F1F1"/><path d="M40.5 98 V117.5 A10.1 3.8 0 0 0 53.5 121" stroke="#8F8F8F" fill="none" stroke-width="1" /><path d="M60.6 98 V106.5" stroke="#8F8F8F" fill="none" stroke-width="1" /><ellipse cx="50.55" cy="98" rx="10.05" ry="3.7" fill="#F7F7F7" stroke="#8F8F8F" stroke-width="1"/><path d="M51.5 108.5 H66.5 V123.5 H51.5 Z" stroke="#8F8F8F" fill="#FFFFFF" stroke-width="1" /><rect x="52" y="109" width="14" height="2.6" fill="#D6D6D6"/><path d="M51.5 111.5 H66.5 M51.5 115.5 H66.5 M51.5 119.5 H66.5 M56.5 111.5 V123.5 M61.5 111.5 V123.5" stroke="#8F8F8F" fill="none" stroke-width="1" /><path d="M87.0 108.5 H81.5 V93.5 H87.5 L92.5 98.5" stroke="#8F8F8F" fill="#F1F1F1" stroke-width="1" /><path d="M87.5 93.5 V98.5 H92.5" stroke="#8F8F8F" fill="none" stroke-width="1" /><path d="M113.0 108.5 H107.5 V93.5 H113.5 L118.5 98.5" stroke="#8F8F8F" fill="#F1F1F1" stroke-width="1" /><path d="M113.5 93.5 V98.5 H118.5" stroke="#8F8F8F" fill="none" stroke-width="1" /><path d="M87.0 134.5 H81.5 V119.5 H87.5 L92.5 124.5" stroke="#8F8F8F" fill="#F1F1F1" stroke-width="1" /><path d="M87.5 119.5 V124.5 H92.5" stroke="#8F8F8F" fill="none" stroke-width="1" /><path d="M113.0 134.5 H107.5 V119.5 H113.5 L118.5 124.5" stroke="#8F8F8F" fill="#F1F1F1" stroke-width="1" /><path d="M113.5 119.5 V124.5 H118.5" stroke="#8F8F8F" fill="none" stroke-width="1" /><path d="M88.5 100.5 H94.5 V108.5 H88.5 Z" stroke="#8F8F8F" fill="#FFFFFF" stroke-width="1" /><path d="M90 103 H93 M90 105 H93 M90 107 H93" stroke="#8F8F8F" fill="none" stroke-width="0.8" /><circle cx="116" cy="104.3" r="4.3" fill="#FFFFFF" stroke="#8F8F8F" stroke-width="1"/><path d="M116 101.8 V104.5 H118.2" stroke="#8F8F8F" fill="none" stroke-width="0.9" /><circle cx="90.2" cy="130.6" r="4.3" fill="#FFFFFF" stroke="#8F8F8F" stroke-width="1"/><path d="M86 130.6 H94.4 M90.2 126.4 V134.8 M87.2 128.4 H93.2 M87.2 132.8 H93.2" stroke="#B5B5B5" fill="none" stroke-width="0.8" /><path d="M111.5 127 V133.3 A4 1.5 0 0 0 119.5 133.3 V127" stroke="#8F8F8F" fill="#FFFFFF" stroke-width="1" /><ellipse cx="115.5" cy="127" rx="4" ry="1.5" fill="#FFFFFF" stroke="#8F8F8F" stroke-width="1"/><path d="M79.5 145.5 H93.5 V159.5 H79.5 Z" stroke="#8F8F8F" fill="#FFFFFF" stroke-width="1" /><rect x="80" y="146" width="13" height="3.5" fill="#E0E0E0"/><path d="M79.5 149.5 H93.5 M79.5 153 H93.5 M79.5 156.3 H93.5 M86.5 149.5 V159.5" stroke="#8F8F8F" fill="none" stroke-width="0.9" /><path d="M62.6 147.6 L64.9 150 L67.2 147.6" stroke="#B5B5B5" fill="none" stroke-width="0.9" /><path d="M151.5 120 V94.5 H164.8" stroke="#8F8F8F" fill="none" stroke-width="1" /><path d="M154.5 121.5 V97.5 H165.3 L172.5 104.5 V110" stroke="#8F8F8F" fill="#F1F1F1" stroke-width="1" /><path d="M154.5 121.5 V97.5 H165.3 L172.5 104.5 V121.5 Z" fill="#F1F1F1"/><path d="M154.5 121.5 V97.5 H165.3 L172.5 104.5" stroke="#8F8F8F" fill="none" stroke-width="1" /><path d="M165.3 97.5 V104.5 H172.5" stroke="#8F8F8F" fill="none" stroke-width="1" /><path d="M154.5 121.5 H163" stroke="#8F8F8F" fill="none" stroke-width="1" /><circle cx="170.4" cy="116.2" r="7.6" fill="#FFFFFF"/><path d="M164 113.5 A7 7 0 0 1 176.8 113.8 M176.8 119 A7 7 0 0 1 164 118.6" stroke="#8F8F8F" fill="none" stroke-width="1.1" /><path d="M177 109.8 V114 H172.8 M163.8 122.6 V118.3 H168" stroke="#8F8F8F" fill="none" stroke-width="1.1" /><path d="M173.2 147.8 L175.5 150.2 L177.8 147.8" stroke="#B5B5B5" fill="none" stroke-width="0.9" /><path d="M189.5 94.5 H204.5 V107.5 H189.5 Z" stroke="#8F8F8F" fill="#F1F1F1" stroke-width="1" /><path d="M189.5 97.5 H204.5 M199.5 97.5 V107.5 M201.2 100 H203 M201.2 102.5 H203 M201.2 105 H203" stroke="#8F8F8F" fill="none" stroke-width="0.9" /><path d="M191.5 119.5 H202.5 V134.5 H191.5 Z" stroke="#8F8F8F" fill="#F1F1F1" stroke-width="1" /><path d="M194 123.5 H196.5 V126 H194 Z M194 129 H196.5 V131.5 H194 Z M198.2 124.8 H200 M198.2 130.2 H200" stroke="#8F8F8F" fill="none" stroke-width="0.8" /><path d="M196 160.5 H191.5 V145.5 H197.5 L202.5 150.5 V153" stroke="#8F8F8F" fill="#F1F1F1" stroke-width="1" /><path d="M197.5 145.5 V150.5 H202.5" stroke="#8F8F8F" fill="none" stroke-width="1" /><path d="M199 161 C194 161 194 155 199 155.5 C202.5 156 202 159.5 199.5 159 M197 155.5 C202 153.5 205 157 203.5 160 C202.5 161.5 200 161.5 199 161" stroke="#8F8F8F" fill="none" stroke-width="0.9" /><path d="M466.5 109.5 L469.5 106.5 L472.5 109.5" stroke="#9A9A9A" fill="none" stroke-width="0.9" /><path d="M466.5 125.5 L469.5 128.5 L472.5 125.5" stroke="#9A9A9A" fill="none" stroke-width="0.9" /><path d="M466.5 143.5 H472.5 M466.5 146.5 L469.5 149.5 L472.5 146.5" stroke="#9A9A9A" fill="none" stroke-width="0.9" /><path d="M322.5 115.5 L335.5 107.7 L348.5 115.5 Z" stroke="#3A3A3A" fill="#FAFAFA" stroke-width="1.2" stroke-linejoin="round"/><path d="M325.5 115.5 V127.5 M330.5 115.5 V127.5 M335.5 115.5 V127.5 M340.5 115.5 V127.5 M345.5 115.5 V127.5" stroke="#3A3A3A" fill="none" stroke-width="1.2" /><path d="M323.5 127.5 H347.5 L348.5 130 H322.5 Z" stroke="#3A3A3A" fill="#FAFAFA" stroke-width="1.2" stroke-linejoin="round"/><path d="M405.5 110.5 H432.5 V120 M421 127.5 H405.5 V110.5" stroke="#3A3A3A" fill="none" stroke-width="1.1" /><path d="M410.5 112.8 H408 V125 H410.5 M429 112.8 H431 V120" stroke="#3A3A3A" fill="none" stroke-width="1.1" /><ellipse cx="419" cy="119" rx="3.7" ry="5.6" fill="none" stroke="#3A3A3A" stroke-width="1.1"/><path d="M421.8 130.8 V133.0 A6.2 2.3 0 0 0 434.2 133.0 V130.8" fill="#FAFAFA" stroke="#3A3A3A" stroke-width="1.1"/><path d="M421.8 127.5 V129.7 A6.2 2.3 0 0 0 434.2 129.7 V127.5" fill="#FAFAFA" stroke="#3A3A3A" stroke-width="1.1"/><path d="M421.8 124.2 V126.4 A6.2 2.3 0 0 0 434.2 126.4 V124.2" fill="#FAFAFA" stroke="#3A3A3A" stroke-width="1.1"/><ellipse cx="428" cy="123.2" rx="6.2" ry="2.3" fill="#FAFAFA" stroke="#3A3A3A" stroke-width="1.1"/><text x="500" y="107.7" font-family="Liberation Sans" font-size="9" fill="#B0B0B0">A</text><text x="500.3" y="117" font-family="Liberation Sans" font-size="9" fill="#8A8A8A">Z</text><text x="500.3" y="139.7" font-family="Liberation Sans" font-size="9" fill="#8A8A8A">Z</text><text x="500" y="148.9" font-family="Liberation Sans" font-size="9" fill="#B0B0B0">A</text><path d="M512.6 101 V116.8 M509 113.2 L512.6 116.8 L516.2 113.2" stroke="#8F8F8F" fill="none" stroke-width="1" /><path d="M512.6 133 V148.8 M509 145.2 L512.6 148.8 L516.2 145.2" stroke="#8F8F8F" fill="none" stroke-width="1" /><path d="M532.5 94.5 H559.5 V121.5 H532.5 Z" stroke="#8F8F8F" fill="#F1F1F1" stroke-width="1" /><rect x="533" y="95" width="26" height="3.5" fill="#D2D2D2"/><path d="M532.5 98.5 H559.5 M545.8 98.5 V121.5" stroke="#8F8F8F" fill="none" stroke-width="1" /><text x="535.3" y="108.5" font-family="Liberation Sans" font-size="9" fill="#8A8A8A">Z</text><text x="535.3" y="119" font-family="Liberation Sans" font-size="9" fill="#B0B0B0">A</text><text x="548.8" y="108.5" font-family="Liberation Sans" font-size="9" fill="#B0B0B0">A</text><text x="548.8" y="119" font-family="Liberation Sans" font-size="9" fill="#8A8A8A">Z</text><path d="M576.5 96 V157" stroke="#E1E1E1" fill="none" stroke-width="1" /><path d="M593.5 94.5 H619.5 V100 L609.8 109.6 V121.5 H603.3 V109.6 L593.5 100 Z" stroke="#8F8F8F" fill="#F1F1F1" stroke-width="1" stroke-linejoin="round"/><path d="M637.5 94.0 H652.5 V96.0 L647 101.5 M641.5 102.0 V108.5 M637.5 94.0 V96.0 L641.5 100.5" stroke="#8F8F8F" fill="none" stroke-width="1" /><path d="M637.5 94.0 H652.5 V96.0 L647 101.5 H642 L637.5 96.0 Z" fill="#F1F1F1"/><path d="M637.5 94.0 H652.5 V96.0 L647.5 101.0 M641.5 101.5 V108.5 M637.5 94.0 V96.0 L641.5 100.0" stroke="#8F8F8F" fill="none" stroke-width="1" /><path d="M645 103.5 L652 109.5 M652 103.5 L645 109.5" stroke="#B5B5B5" fill="none" stroke-width="1" /><path d="M637.5 120.0 H652.5 V122.0 L647 127.5 M641.5 128.0 V134.5 M637.5 120.0 V122.0 L641.5 126.5" stroke="#8F8F8F" fill="none" stroke-width="1" /><path d="M637.5 120.0 H652.5 V122.0 L647 127.5 H642 L637.5 122.0 Z" fill="#F1F1F1"/><path d="M637.5 120.0 H652.5 V122.0 L647.5 127.0 M641.5 127.5 V134.5 M637.5 120.0 V122.0 L641.5 126.0" stroke="#8F8F8F" fill="none" stroke-width="1" /><path d="M646 125.5 A4 4 0 0 1 653 126 M653 131.5 A4 4 0 0 1 646 131 M653.5 123.5 V126.5 H650.5 M645.5 133.5 V130.5 H648.5" stroke="#8F8F8F" fill="none" stroke-width="0.9" /><path d="M637.5 146.0 H652.5 V148.0 L647 153.5 M641.5 154.0 V160.5 M637.5 146.0 V148.0 L641.5 152.5" stroke="#8F8F8F" fill="none" stroke-width="1" /><path d="M637.5 146.0 H652.5 V148.0 L647 153.5 H642 L637.5 148.0 Z" fill="#F1F1F1"/><path d="M637.5 146.0 H652.5 V148.0 L647.5 153.0 M641.5 153.5 V160.5 M637.5 146.0 V148.0 L641.5 152.0" stroke="#8F8F8F" fill="none" stroke-width="1" /><circle cx="649.3" cy="156.5" r="3" fill="#FFFFFF" stroke="#8F8F8F" stroke-width="1.4" stroke-dasharray="1.2 0.8"/><circle cx="649.3" cy="156.5" r="1" fill="#8F8F8F"/><path d="M748 98.5 H760 M748 102.5 H760 M751.5 106.5 H760" stroke="#8F8F8F" fill="none" stroke-width="1" /><path d="M747.5 106 C743.5 109 744 117.5 755 118 M751.5 114 L756 118 L751.5 122" stroke="#B5B5B5" fill="none" stroke-width="1" /><path d="M764.5 94.5 H773.5 V121.5 H764.5 Z" stroke="#8F8F8F" fill="#F1F1F1" stroke-width="1" /><path d="M764.5 103.5 H773.5 M764.5 112.5 H773.5 M767.5 98.5 H770.5 M767.5 107.5 H770.5 M767.5 116.5 H770.5" stroke="#8F8F8F" fill="none" stroke-width="0.9" /><path d="M797.5 100.5 H812.5 V107.5 H797.5 Z" stroke="#8F8F8F" fill="#F1F1F1" stroke-width="1" /><path d="M804 94 H812.5 V107.5 M797.5 103.5 H812.5 M802.5 100.5 V107.5 M807.5 94 V107.5" stroke="#8F8F8F" fill="none" stroke-width="0.9" /><path d="M802 93.5 L797.8 99 H800.5 L798.5 103 L803.5 97.5 H801 Z" stroke="#8F8F8F" fill="#8F8F8F" stroke-width="0.5" /><rect x="800" y="120" width="10" height="4.5" fill="#D2D2D2"/><rect x="800" y="124.5" width="10" height="5" fill="#EFEFEF"/><rect x="800" y="129.5" width="6" height="4.6" fill="#D2D2D2"/><path d="M805.5 134.5 H799.5 V119.5 H810.5 V127.5 M799.5 124.5 H810.5 M799.5 129.5 H805" stroke="#8F8F8F" fill="none" stroke-width="1" /><path d="M806.5 128.5 L813 135 M813 128.5 L806.5 135" stroke="#B5B5B5" fill="none" stroke-width="1" /><path d="M803 147.5 H797.5 V151 H803 M803 155.5 H797.5 V159.5 H803" stroke="#8F8F8F" fill="none" stroke-width="1" /><path d="M804.3 149.3 L807.6 152.3 L813 145.5" stroke="#8F8F8F" fill="none" stroke-width="1" /><circle cx="808" cy="157" r="3.7" fill="#FFFFFF" stroke="#8F8F8F" stroke-width="1.1"/><path d="M805.4 154.4 L810.6 159.6" stroke="#8F8F8F" fill="none" stroke-width="1.1" /><path d="M821.3 152.2 L823.6 154.6 L825.9 152.2" stroke="#B5B5B5" fill="none" stroke-width="0.9" /><path d="M839.5 94.5 H844.5 V98.5 H839.5 Z M839.5 102.5 H844.5 V106.5 H839.5 Z" stroke="#8F8F8F" fill="#F1F1F1" stroke-width="1" /><path d="M839.5 94.5 V106.5" stroke="#8F8F8F" fill="none" stroke-width="1" /><path d="M849.5 98.5 H854.5 V102.5 H849.5 Z" stroke="#8F8F8F" fill="#F1F1F1" stroke-width="1" /><path d="M842 100.5 H848 M846.5 99 L848 100.5 L846.5 102" stroke="#B5B5B5" fill="none" stroke-width="0.9" /><path d="M839.5 123.5 H845.5 V129.5 H839.5 Z M848.5 119.5 H854.5 V125.5 H848.5 Z M848.5 128.5 H854.5 V134.5 H848.5 Z" stroke="#8F8F8F" fill="#FFFFFF" stroke-width="1.1" /><path d="M845.5 126.5 L848.5 122.5 M845.5 126.5 L848.5 131.5 M841 125.5 H844 M841 127.5 H844 M850 121.5 H853 M850 123.5 H853 M850 130.5 H853 M850 132.5 H853" stroke="#8F8F8F" fill="none" stroke-width="0.8" /><path d="M839.5 147.5 C843 145.5 849 145 853.5 146.5 V149 H848 V160 H840 Z" fill="#C9C9C9"/><path d="M843.5 150 V157.5 L841.5 158.5 M845.5 150 V156" stroke="#FFFFFF" stroke-width="1" fill="none"/><rect x="848.5" y="149" width="6.5" height="11" fill="#FFFFFF" stroke="#B0B0B0" stroke-width="1"/><path d="M848.5 152.7 H855 M848.5 156.3 H855 M851.7 149 V160" stroke="#B0B0B0" fill="none" stroke-width="0.9" /><rect x="900.5" y="97.5" width="27" height="21" fill="#F1F1F1"/><rect x="901" y="98" width="8.8" height="6.4" fill="#D2D2D2"/><rect x="901" y="111.6" width="8.8" height="6.6" fill="#D2D2D2"/><path d="M900.5 97.5 H927.5 V104 M921 118.5 H900.5 V97.5 M909.5 97.5 V118.5 M918.5 97.5 V118.5 M900.5 104.5 H927.5 M900.5 111.5 H921" stroke="#8F8F8F" fill="none" stroke-width="1" /><path d="M922.3 111.5 C922.3 107.8 929.7 107.3 929.7 111.3 C929.7 114 925.8 114.5 925.8 118.8 M925.8 121.8 V123.3" stroke="#B5B5B5" fill="none" stroke-width="1.1" /><path d="M962.5 95.5 H989.5 V115.5 H976 L972 119.5 H962.5 Z" stroke="#8F8F8F" fill="#F1F1F1" stroke-width="1" stroke-linejoin="round"/><path d="M962.5 101.5 H989.5 M962.5 108.5 H989.5 M971.5 95.5 V115.5 M980.5 95.5 V115.5 M962.5 115.5 H976" stroke="#8F8F8F" fill="none" stroke-width="0.9" /><path d="M963 113 L969.5 106.5 L973.5 109.5 L979 104 L982 106 L987.5 99.5 M983.5 99 H987.8 V103.3" stroke="#B5B5B5" fill="none" stroke-width="1.1" /><path d="M1024.5 101.5 H1030.5 V107.5 H1024.5 Z" stroke="#222" fill="#FFFFFF" stroke-width="1" /><rect x="1026" y="103" width="3" height="3" fill="#1A86D8"/><path d="M1028 98.5 H1030 M1028 110.5 H1030" stroke="#444" fill="none" stroke-width="0.9" /><path d="M1033.5 98.5 H1039.5 V110.5 H1033.5 Z M1033.5 102.5 H1039.5 M1033.5 106.5 H1039.5" stroke="#222" fill="none" stroke-width="1" /><path d="M1039.6 146.4 L1042 148.8 L1044.4 146.4" stroke="#333" fill="none" stroke-width="0.9" /><path d="M912.8 147.8 L915.3 150.3 L917.8 147.8" stroke="#B5B5B5" fill="none" stroke-width="0.9" /><path d="M1260.5 170 L1265 174.5 L1269.5 170" stroke="#333" fill="none" stroke-width="1.1" /><circle cx="38" cy="202.8" r="10.3" fill="#FFFFFF" stroke="#1C7FD1" stroke-width="1.4"/><path d="M38 199.5 V209" stroke="#1C7FD1" fill="none" stroke-width="2" /><rect x="37" y="195.8" width="2" height="2" fill="#1C7FD1"/><path d="M1261.3 198.5 L1268.9 205.9 M1268.9 198.5 L1261.3 205.9" stroke="#505050" fill="none" stroke-width="2" /><path d="M104.5 241.3 L109.5 246.3 L114.5 241.3" stroke="#333" fill="none" stroke-width="1.1" /><rect x="129.4" y="237.5" width="2.2" height="2.2" fill="#333"/><rect x="129.4" y="241.8" width="2.2" height="2.2" fill="#333"/><rect x="129.4" y="246.2" width="2.2" height="2.2" fill="#333"/><path d="M147 236.8 L159 248.8 M159 236.8 L147 248.8" stroke="#E0443E" fill="none" stroke-width="1.3" /><path d="M169 241.8 L174 246.8 L184.5 236.8" stroke="#3AA35A" fill="none" stroke-width="1.3" /><text x="195" y="248.5" font-family="Liberation Serif" font-style="italic" font-weight="bold" font-size="16" fill="#333">f</text><text x="201.5" y="248.5" font-family="Liberation Serif" font-style="italic" font-weight="bold" font-size="14" fill="#333">x</text><path d="M1266 239.3 L1270.7 244 L1275.4 239.3" stroke="#333" fill="none" stroke-width="1.1" /></svg>
<div style="position:absolute;left:10px;top:7px;width:1278px;height:718px;border:1px solid #FBFBFB;box-sizing:border-box;border-radius:7px;"></div>
</body></html>
